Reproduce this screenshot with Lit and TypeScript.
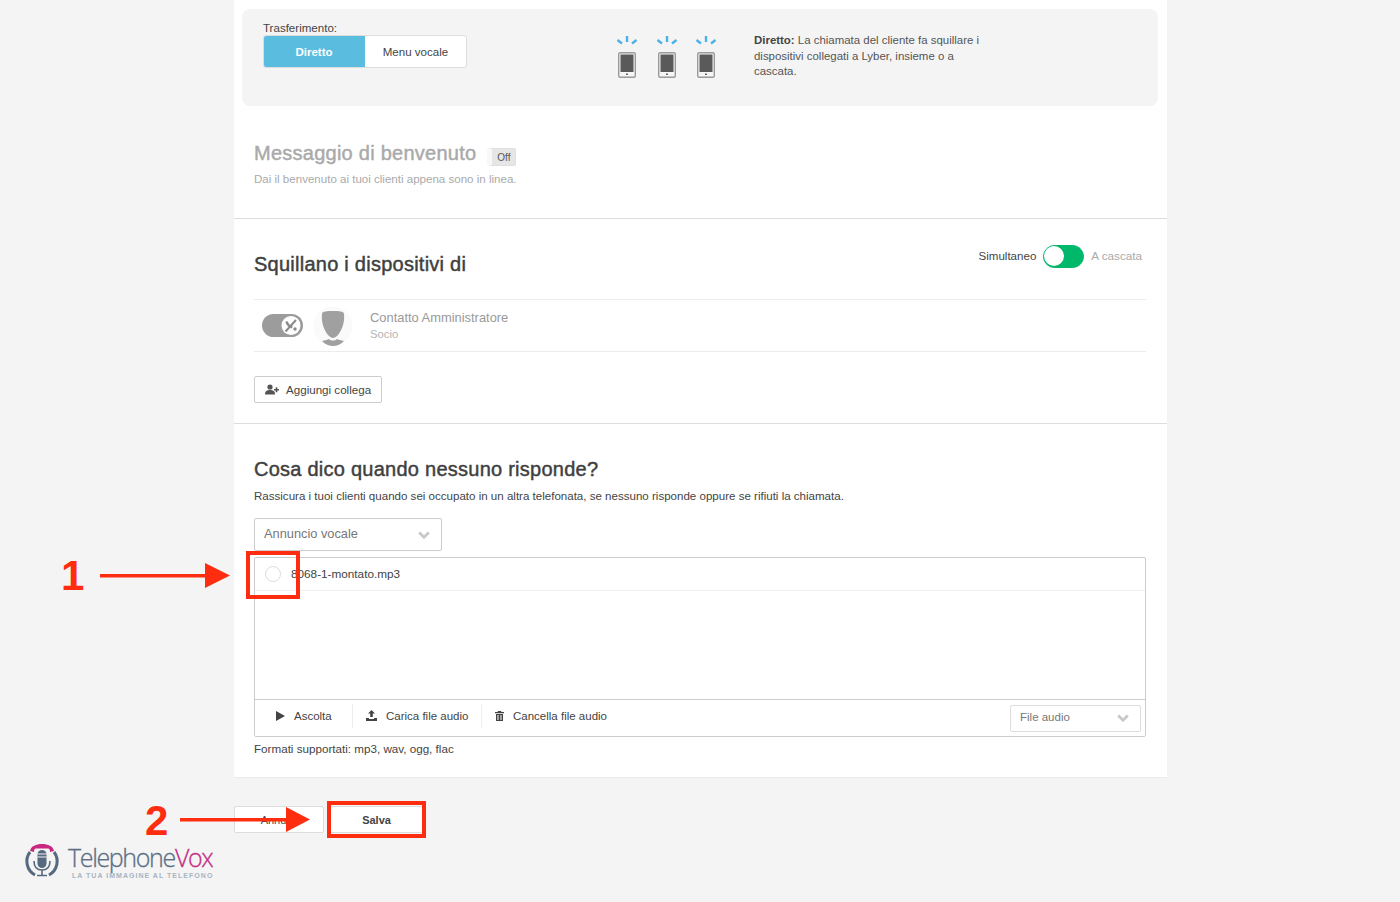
import { LitElement, html, css, svg } from "lit";
import { customElement } from "lit/decorators.js";

const phone = svg`<svg class="phone" width="24" height="43" viewBox="0 0 24 43">
  <g fill="none" stroke="#4db1e8" stroke-width="2.400" stroke-linecap="butt">
    <path d="M12 1v6"/><path d="M2.500 5l4.500 3.500"/><path d="M21.500 5L17 8.500"/>
  </g>
  <rect x="3.700" y="17.700" width="16.600" height="24.600" rx="1.500" fill="#f5f5f5" stroke="#9a9a9a" stroke-width="1.400"/>
  <rect x="5.500" y="19.500" width="13" height="17.500" fill="#5a5a5a"/>
  <rect x="11" y="38.500" width="2" height="1.500" fill="#666"/>
</svg>`;

const chevron = svg`<svg class="chev" width="12" height="8" viewBox="0 0 12 8"><path d="M1.200 1.500L6 6.200l4.800-4.700" fill="none" stroke="#c8c8c8" stroke-width="2.800"/></svg>`;

@customElement("app-root")
export class AppRoot extends LitElement {
  static styles = css`
    :host {
      display: block;
      position: relative;
      height: 902px;
      overflow: hidden;
      background: #f4f4f4;
      font-family: "Liberation Sans", Arial, sans-serif;
      font-size: 11.550px;
      color: #444;
    }
    .card {
      margin-left: 234px;
      width: 933px;
      height: 777px;
      background: #fff;
      box-shadow: 0 1px 1px #ececec;
      display: flex;
      flex-direction: column;
    }
    .transfer {
      margin: 9px 9px 0 8px;
      height: 97px;
      box-sizing: border-box;
      background: #f4f4f4;
      border-radius: 8px;
      padding: 13px 21px;
      display: flex;
      flex: none;
    }
    .t-left { width: 345px; flex: none; }
    .t-label { line-height: 13px; color: #444; }
    .seg {
      display: flex;
      width: 204px;
      height: 33px;
      border: 1px solid #ddd;
      border-radius: 3px;
      overflow: hidden;
      background: #fff;
      box-sizing: border-box;
    }
    .seg div { display: flex; align-items: center; justify-content: center; }
    .seg .on { width: 102px; background: #5abde0; color: #fff; font-weight: bold; margin: -1px 0 -1px -1px; }
    .seg .off { flex: 1; color: #444; }
    .phones { display: flex; gap: 15.500px; margin-top: 13px; width: 139px; flex: none; margin-left: 7px; }
    .t-desc { width: 235px; font-size: 11.450px; line-height: 15.500px; margin-top: 11.200px; color: #555; flex: none; }
    .t-desc b { color: #444; }

    .welcome {
      height: 113px;
      flex: none;
      box-sizing: border-box;
      border-bottom: 1px solid #ddd;
      padding: 34px 20px 0;
    }
    .w-title { display: flex; align-items: center; gap: 11px; }
    h2 {
      margin: 0;
      font-size: 20px;
      line-height: 24px;
      font-weight: normal;
      letter-spacing: 0.250px;
      color: #3f3f3f;
      -webkit-text-stroke: 0.450px currentColor;
    }
    .welcome h2 { color: #aaa; }
    .mini {
      width: 29px;
      height: 18px;
      box-sizing: border-box;
      margin-top: 8px;
      background: #e6e6e6;
      border: 1px solid #e0e0e0;
      border-left: 5px solid #f8f8f8;
      border-radius: 2px;
      font-size: 10px;
      color: #555;
      display: flex;
      align-items: center;
      justify-content: center;
    }
    .w-sub { margin-top: 6px; color: #aaa; line-height: 14px; }

    .ring {
      height: 205px;
      flex: none;
      box-sizing: border-box;
      border-bottom: 1px solid #ddd;
      padding: 0 21px 0 20px;
    }
    .r-head { display: flex; justify-content: space-between; height: 80px; padding-top: 33px; box-sizing: border-box; }
    .mode { display: flex; align-items: center; height: 10px; gap: 7px; margin-top: -0.500px; padding-right: 4px; }
    .mode span { margin-top: -2px; }
    .mode .dim { color: #aaa; font-size: 11.700px; }
    .sw {
      width: 41px;
      height: 23px;
      box-sizing: border-box;
      border-radius: 12px;
      background: #00b76a;
      border: 1.500px solid #00b76a;
      display: flex;
    }
    .sw i { width: 20px; height: 20px; background: #fff; border-radius: 50%; display: block; }
    .person {
      border-top: 1px solid #ececec;
      border-bottom: 1px solid #ececec;
      height: 53px;
      box-sizing: border-box;
      display: flex;
      align-items: center;
      padding-left: 8px;
    }
    .ps {
      width: 41px;
      height: 23px;
      border-radius: 12px;
      background: #9c9c9c;
      flex: none;
    }
    .ps svg { display: block; }
    .avatar { margin-left: 10px; display: block; flex: none; }
    .p-text { margin-left: 17px; }
    .p-name { font-size: 12.900px; color: #999; line-height: 16px; }
    .p-role { font-size: 11.300px; color: #b5b5b5; line-height: 14px; margin-top: 1px; }
    .btn {
      border: 1px solid #ccc;
      border-radius: 2px;
      background: #fff;
      box-sizing: border-box;
      display: flex;
      align-items: center;
      justify-content: center;
    }
    .add {
      width: 128px;
      height: 27px;
      margin-top: 24px;
      justify-content: flex-start;
      padding-left: 10px;
      gap: 7px;
      font-size: 11.600px;
      color: #444;
    }

    .answer { padding: 33px 21px 0 20px; flex: 1; }
    .a-sub { margin-top: 8px; line-height: 14px; color: #444; }
    .sel {
      border: 1px solid #ccc;
      border-radius: 2px;
      background: #fff;
      box-sizing: border-box;
      display: flex;
      align-items: center;
      justify-content: space-between;
      color: #777;
    }
    .sel span { margin-top: -2px; }
    .s1 { width: 188px; height: 33px; margin-top: 15px; padding: 0 11px 0 9px; font-size: 12.800px; }
    .s2 { width: 131px; height: 27px; padding: 0 11px 0 9px; border-color: #ddd; }
    .box {
      margin-top: 6px;
      height: 180px;
      box-sizing: border-box;
      border: 1px solid #ccc;
      border-radius: 2px;
      display: flex;
      flex-direction: column;
    }
    .file {
      height: 33px;
      box-sizing: border-box;
      border-bottom: 1px solid #f0f0f0;
      display: flex;
      align-items: center;
      padding-left: 10px;
      gap: 10px;
      color: #444;
      font-size: 11.750px;
    }
    .file .name { margin-top: -2px; }
    .radio { width: 16px; height: 16px; box-sizing: border-box; border: 1px solid #ddd; border-radius: 50%; flex: none; }
    .space { flex: 1; }
    .tools {
      height: 37px;
      box-sizing: border-box;
      border-top: 1px solid #ccc;
      display: flex;
      align-items: center;
      padding-right: 4px;
      color: #444;
      font-size: 11.500px;
    }
    .tool { display: flex; align-items: center; height: 24px; margin-top: -5px; border-right: 1px solid #eee; box-sizing: border-box; }
    .tool.a { width: 98px; padding-left: 21px; gap: 9px; }
    .tool.b { width: 129px; padding-left: 13px; gap: 9px; }
    .tool.c { padding-left: 13px; gap: 9px; border: 0; }
    .tools .sel { margin-left: auto; }
    .formats { margin-top: 5px; line-height: 14px; color: #444; font-size: 11.650px; }

    .actions { margin: 29px 0 0 234px; display: flex; gap: 6px; align-items: center; }
    .actions .btn { height: 27px; width: 90px; border-color: #ddd; color: #444; font-size: 11px; }
    .actions .save { width: 93px; font-weight: bold; }

    .logo {
      position: absolute;
      left: 24px;
      top: 842px;
      display: flex;
      gap: 8px;
    }
    .brand { font-family: "Open Sans", "Liberation Sans", sans-serif; font-size: 25px; letter-spacing: -1.350px; line-height: 26px; margin-top: 2px; color: #5b6f85; font-weight: 300; -webkit-text-stroke: 0.300px #5b6f85; }
    .brand span { color: #c22f85; -webkit-text-stroke: 0.300px #c22f85; }
    .tag { font-size: 7px; letter-spacing: 1.020px; color: #a7b4c3; line-height: 8px; margin-top: 2px; margin-left: 4px; white-space: nowrap; font-weight: bold; }

    .anno { position: absolute; left: 0; top: 0; pointer-events: none; }
    .num { position: absolute; color: #ff2d0f; font-weight: bold; font-size: 42px; line-height: 42px; }
    .n1 { left: 61px; top: 555px; }
    .n2 { left: 145px; top: 800px; }
  `;

  render() {
    return html`
      <div class="card">
        <section class="transfer">
          <div class="t-left">
            <div class="t-label">Trasferimento:</div>
            <div class="seg"><div class="on">Diretto</div><div class="off">Menu vocale</div></div>
          </div>
          <div class="phones">${phone}${phone}${phone}</div>
          <div class="t-desc"><b>Diretto:</b> La chiamata del cliente fa squillare i dispositivi collegati a Lyber, insieme o a cascata.</div>
        </section>

        <section class="welcome">
          <div class="w-title"><h2>Messaggio di benvenuto</h2><div class="mini">Off</div></div>
          <div class="w-sub">Dai il benvenuto ai tuoi clienti appena sono in linea.</div>
        </section>

        <section class="ring">
          <div class="r-head">
            <h2>Squillano i dispositivi di</h2>
            <div class="mode"><span>Simultaneo</span><div class="sw"><i></i></div><span class="dim">A cascata</span></div>
          </div>
          <div class="person">
            <div class="ps">
              <svg width="41" height="23" viewBox="0 0 41 23">
                <circle cx="29" cy="11.500" r="9.500" fill="#fff"/>
                <path d="M23.500 17.500L34 6" stroke="#8a8a8a" stroke-width="2"/>
                <path d="M24.500 7.500c.8 2.800 3 5 5.800 5.800" stroke="#8a8a8a" stroke-width="2.600" fill="none"/>
                <circle cx="33" cy="15" r="1.700" fill="#8a8a8a"/>
              </svg>
            </div>
            <svg class="avatar" width="40" height="40" viewBox="0 0 40 40">
              <circle cx="20" cy="20" r="19.500" fill="#fafafa"/>
              <path d="M9 8C9 5 14 5 20 5s11 0 11 3c1 8-2 16-6 21-2 2-3.500 3-5 3s-3-1-5-3C11 24 8 16 9 8z" fill="#a0a0a0"/>
              <path d="M9 35c3-.5 6-1.500 7-2 2 2 6 2 8 0 1 .5 4 1.500 7 2-3 3.500-7 5-11 5s-8-1.500-11-5z" fill="#a0a0a0"/>
            </svg>
            <div class="p-text">
              <div class="p-name">Contatto Amministratore</div>
              <div class="p-role">Socio</div>
            </div>
          </div>
          <div class="btn add">
            <svg width="14" height="11" viewBox="0 0 14 11" fill="#555">
              <circle cx="5" cy="3" r="2.600"/><path d="M0 10.500c0-3.500 2-4.500 5-4.500s5 1 5 4.500z"/>
              <path d="M9 5h5v1.500H9zM10.700 3.200h1.600v5h-1.600z"/>
            </svg>
            <span>Aggiungi collega</span>
          </div>
        </section>

        <section class="answer">
          <h2>Cosa dico quando nessuno risponde?</h2>
          <div class="a-sub">Rassicura i tuoi clienti quando sei occupato in un altra telefonata, se nessuno risponde oppure se rifiuti la chiamata.</div>
          <div class="sel s1"><span>Annuncio vocale</span>${chevron}</div>
          <div class="box">
            <div class="file"><span class="radio"></span><span class="name">8068-1-montato.mp3</span></div>
            <div class="space"></div>
            <div class="tools">
              <div class="tool a">
                <svg width="9" height="10" viewBox="0 0 9 10"><path d="M0 0l9 5-9 5z" fill="#444"/></svg>
                <span>Ascolta</span>
              </div>
              <div class="tool b">
                <svg width="11" height="11" viewBox="0 0 11 11" fill="#444"><path d="M5.500 0L9 3.500H6.800V7H4.200V3.500H2zM0 8h3v1h5V8h3v3H0z"/></svg>
                <span>Carica file audio</span>
              </div>
              <div class="tool c">
                <svg width="9" height="10" viewBox="0 0 9 10" fill="#444"><path d="M3 0h3l.5 1H9v1.200H0V1h2.500zM1 3h7v7H1zm1.500 1v5h1V4zm3 0v5h1V4z" fill-rule="evenodd"/></svg>
                <span>Cancella file audio</span>
              </div>
              <div class="sel s2"><span>File audio</span>${chevron}</div>
            </div>
          </div>
          <div class="formats">Formati supportati: mp3, wav, ogg, flac</div>
        </section>
      </div>

      <div class="actions">
        <div class="btn">Annulla</div>
        <div class="btn save">Salva</div>
      </div>

      <div class="logo">
        <svg width="36" height="36" viewBox="0 0 36 36">
          <path d="M6 9C7 4 12 2 18 2s11 2 12 7l-4 1c0-2-.5-3.500-2-3.500H12C10.500 6.500 10 8 10 10z" fill="#c8287f"/>
          <path d="M6 10a15.500 15.500 0 0 0 5 23" fill="none" stroke="#55697f" stroke-width="3"/>
          <path d="M30 10a15.500 15.500 0 0 1-5 23" fill="none" stroke="#55697f" stroke-width="3"/>
          <rect x="13.500" y="8" width="9" height="18" rx="4.500" fill="#55697f"/>
          <path d="M13.500 12h9M13.500 15h9" stroke="#f4f4f4" stroke-width="1"/>
          <path d="M10 19c0 6 3 9 8 9s8-3 8-9M18 28v5M13 33.500h10" fill="none" stroke="#55697f" stroke-width="1.600"/>
        </svg>
        <div>
          <div class="brand">Telephone<span>Vox</span></div>
          <div class="tag">LA TUA IMMAGINE AL TELEFONO</div>
        </div>
      </div>

      <svg class="anno" width="1400" height="902" viewBox="0 0 1400 902">
        <g fill="#ff2d0f">
          <rect x="100" y="574" width="108" height="3.500"/>
          <path d="M205 563l25 12.500-25 12.500z"/>
          <rect x="180" y="818" width="108" height="3.500"/>
          <path d="M286 807l24 12.500-24 12.500z"/>
        </g>
        <g fill="none" stroke="#ff2d0f" stroke-width="4">
          <rect x="248" y="553" width="50" height="44"/>
          <rect x="329" y="803" width="95" height="33"/>
        </g>
      </svg>
      <div class="num n1">1</div>
      <div class="num n2">2</div>
    `;
  }
}
